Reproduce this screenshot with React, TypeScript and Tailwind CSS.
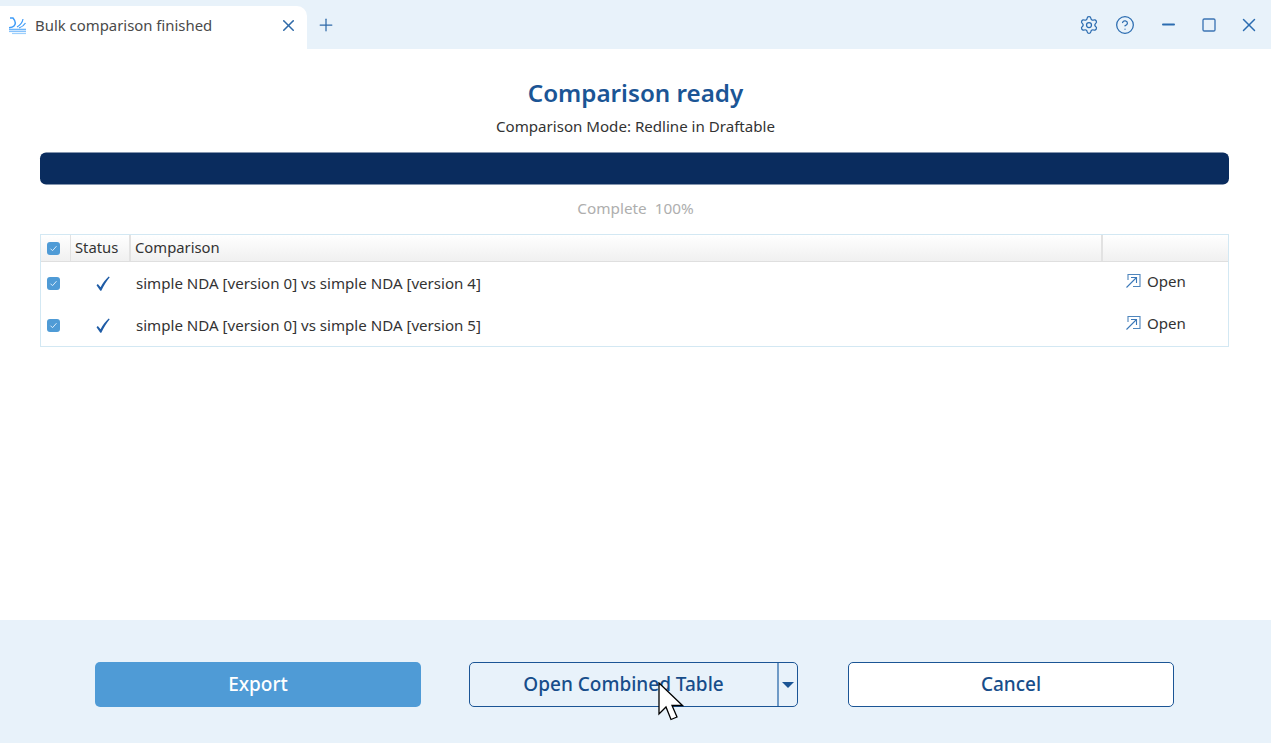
import { Settings, CircleHelp, Minus, Square, X, Plus } from "lucide-react";

const font = { fontFamily: '"Noto Sans", "Open Sans", sans-serif' };

const Logo = () => (
  <svg width="17" height="18" viewBox="0 0 17 18" fill="none" stroke="#3f9cf8" strokeWidth="1.500">
    <path d="M1 1h3c2.500 3 3 6 1 8-1 1-2.500 1.500-5 1.700" />
    <path d="M14 2c-.5 3-2.500 6-6 8" strokeWidth="1.200" />
    <path d="M16.500 6c-1.500 2.500-3.500 4-6.500 5" strokeWidth="1.200" />
    <path d="M0 12.500h17" stroke="#6db5fa" strokeWidth="1.600" />
    <path d="M0 14.500h17" stroke="#86c2fb" strokeWidth="1.200" />
    <path d="M3 16.500h14" stroke="#9dcffc" strokeWidth="1.200" />
  </svg>
);

const Checkbox = () => (
  <span className="flex h-[13px] w-[13px] items-center justify-center rounded-[3px] bg-[#4f9bd6]">
    <svg width="9" height="9" viewBox="0 0 9 9" fill="none" stroke="#d9ecfa" strokeWidth="1">
      <path d="M1.500 4.700 3.500 6.700 7.500 2.200" />
    </svg>
  </span>
);

const Tick = () => (
  <svg width="14" height="15" viewBox="0 0 14 15" fill="#1f5ca6">
    <path d="M0.500 9.200 1.800 8 4.600 11.200C6.600 7.400 9.300 3.600 12.700 0.500L13.700 1.200C10.600 5 7.800 9.500 5.300 14.800H4.300z" />
  </svg>
);

const OpenIcon = () => (
  <svg width="15" height="15" viewBox="0 0 15 15" fill="none" stroke="#3b78b8" strokeWidth="1.100">
    <path d="M2 7V1.500h12v12H7" stroke="#4f86bd" />
    <path d="M0.500 14.500 10.500 4.500M5 4.500h5.500V10" />
  </svg>
);

const rows = [
  "simple NDA [version 0] vs simple NDA [version 4]",
  "simple NDA [version 0] vs simple NDA [version 5]",
];

const App = () => {
  return (
    <div style={font} className="relative flex h-[743px] w-[1271px] flex-col overflow-hidden bg-white text-[#333]">
      <header className="flex h-[49px] shrink-0 items-end bg-[#e8f2fa]">
        <div className="flex h-[43px] w-[307px] items-center rounded-tr-[10px] bg-white pb-[4px] pl-[9px] pr-[9.500px]">
          <Logo />
          <span className="ml-[9px] flex-1 text-[14.900px] text-[#4a4a4a]">Bulk comparison finished</span>
          <X size={19} color="#2f6aa8" strokeWidth={1.900} />
        </div>
        <div className="flex h-[49px] flex-1 items-center">
          <Plus size={20} color="#2f6aa8" strokeWidth={1.500} className="ml-[9px]" />
          <div className="ml-auto flex items-center pr-[11px]">
            <Settings size={20} color="#2b6cb0" strokeWidth={1.500} />
            <CircleHelp size={20} color="#2b6cb0" strokeWidth={1.500} className="ml-[16px]" />
            <Minus size={19} color="#2b6cb0" strokeWidth={2.400} className="ml-[23.500px]" />
            <Square size={16} color="#3b74b4" strokeWidth={2} className="ml-[23.500px]" />
            <X size={22} color="#2b6cb0" strokeWidth={1.600} className="ml-[21px]" />
          </div>
        </div>
      </header>

      <main className="flex flex-1 flex-col px-[40px] pt-[27px]">
        <h1 className="text-center text-[24.200px] leading-[34px] font-semibold text-[#1b5595]">Comparison ready</h1>
        <p className="mt-[6px] text-center text-[15.100px] leading-[20px] text-[#333]">Comparison Mode: Redline in Draftable</p>
        <div className="mt-[16px] h-[32px] w-[1189px] translate-y-[0.500px] rounded-[6px] bg-[#0a2c5e]" />
        <p className="mt-[14px] text-center text-[15.300px] leading-[20px] text-[#aeaeae]">Complete&nbsp; 100%</p>

        <div className="mt-[16px] w-[1189px] border border-[#d3e8f3]">
          <div className="flex h-[27px] border-b border-[#dfdfdf] bg-gradient-to-b from-white to-[#f0f0f0] text-[14.800px] text-[#333]">
            <div className="flex w-[30px] items-center border-r border-[#e2e2e2] pl-[6px]">
              <Checkbox />
            </div>
            <div className="flex w-[60px] items-center border-r-2 border-[#e2e2e2] pb-[2px] pl-[4px]">Status</div>
            <div className="flex flex-1 items-center border-r-2 border-[#e2e2e2] pb-[2px] pl-[4px]">Comparison</div>
            <div className="w-[125px]" />
          </div>
          {rows.map((row) => (
            <div key={row} className="flex h-[42px] items-center text-[15.100px] text-[#333]">
              <div className="flex w-[30px] pl-[6px]">
                <Checkbox />
              </div>
              <div className="flex w-[60px] justify-center pl-[4px]">
                <Tick />
              </div>
              <div className="flex-1 pl-[5px]">{row}</div>
              <div className="flex w-[125px] items-center pb-[4px] pl-[23px]">
                <OpenIcon />
                <span className="ml-[6px]">Open</span>
              </div>
            </div>
          ))}
        </div>
      </main>

      <footer className="flex h-[123px] shrink-0 items-start bg-[#e8f2fa] pl-[95px] pt-[42px] text-[19px] font-medium">
        <button className="h-[45px] w-[326px] rounded-[5px] bg-[#4f9bd6] text-white">Export</button>
        <div className="ml-[48px] flex h-[45px] w-[329px] rounded-[5px] border border-[#1b5595] text-[#174d8a]">
          <button className="flex-1 border-r-2 border-[#6f9bc7]">Open Combined Table</button>
          <button className="flex w-[18px] items-center justify-center">
            <span className="h-0 w-0 border-x-[6px] border-t-[6px] border-x-transparent border-t-[#1b5595]" />
          </button>
        </div>
        <button className="ml-[50px] h-[45px] w-[326px] rounded-[5px] border border-[#1b5595] bg-white text-[#174d8a]">Cancel</button>
      </footer>

      <svg className="absolute left-[658px] top-[682px]" width="26" height="40" viewBox="0 0 26 40" fill="#fff" stroke="#000" strokeWidth="1.300">
        <path d="M1 1V32L8 25 13 37.500 19 35 14 23.500H24.500z" />
      </svg>
    </div>
  );
};

export default App;
